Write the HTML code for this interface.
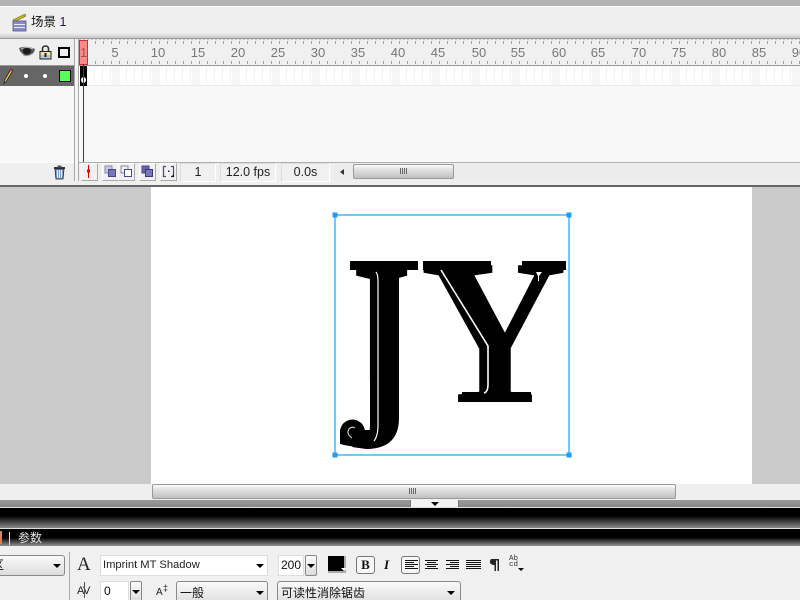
<!DOCTYPE html>
<html style="height:600px;overflow:hidden"><head><meta charset="utf-8">
<style>
html,body{margin:0;padding:0;background:#efefef}
body{width:800px;height:600px;font-family:"Liberation Sans","Noto Sans CJK SC",sans-serif;color:#111}
#w{position:relative;width:800px;height:600px;overflow:hidden}
.a{position:absolute}
.rn{position:absolute;top:45px;width:30px;text-align:center;font-size:13px;color:#777;line-height:15px}
.btn{position:absolute;top:163px;width:15px;height:16px;background:#f1f1f1;border-right:1px solid #aaa;border-bottom:1px solid #aaa;border-top:1px solid #fff;border-left:1px solid #fff}
.fld{position:absolute;top:163px;height:17px;background:#f0f0f0;border:1px solid #ddd;border-bottom-color:#fff;border-right-color:#fff;text-align:center;font-size:12.5px;line-height:17px;color:#222}
.thumb{background:linear-gradient(#fafafa,#e4e4e4 30%,#c0c0c0);border:1px solid #9a9a9a;border-radius:2px;box-sizing:border-box}
.inp{position:absolute;background:#fff;border:1px solid #ddd;box-sizing:border-box;font-size:12px;color:#111}
.sel{position:absolute;box-sizing:border-box;border:1px solid #8a8a8a;border-radius:3px;background:linear-gradient(#fafafa,#dcdcdc);font-size:12px}
.tri{position:absolute;width:0;height:0;border-left:4px solid transparent;border-right:4px solid transparent;border-top:4px solid #000}
</style></head><body><div id="w">

<!-- top -->
<div class="a" style="left:0;top:0;width:800px;height:6px;background:#b3b3b3"></div>
<div class="a" style="left:0;top:6px;width:800px;height:1px;background:#fff"></div>
<div class="a" style="left:0;top:33px;width:800px;height:5px;background:linear-gradient(#efefef,#c8c8c8)"></div>
<svg class="a" style="left:11px;top:12px" width="17" height="20" viewBox="0 0 17 20">
<path d="M2 8 L14 2 L15 4 L3 10Z" fill="#c8b820" stroke="#6b6420" stroke-width=".6"/>
<rect x="2" y="9" width="13" height="10" fill="#8a8ac8" stroke="#55558a" stroke-width=".8"/>
<rect x="3" y="12" width="11" height="1" fill="#e8e8f8"/><rect x="3" y="15" width="11" height="1" fill="#e8e8f8"/>
</svg>
<div class="a" style="left:31px;top:14px;font-size:12.5px;line-height:17px;font-family:'Liberation Sans','WenQuanYi Zen Hei','Noto Sans CJK SC',sans-serif;color:#111;white-space:pre">场景 <span style="color:#301050">1</span></div>

<!-- timeline left -->
<div class="a" style="left:0;top:38px;width:800px;height:1px;background:#9a9a9a"></div>
<div class="a" style="left:0;top:39px;width:74px;height:26px;background:#efefef"></div>
<div class="a" style="left:79px;top:39px;width:721px;height:26px;background:#f0f0f0"></div>
<div class="a" style="left:79px;top:39px;width:721px;height:1px;background:repeating-linear-gradient(90deg,#c4c4c4 0 2px,#eee 2px 4px)"></div>
<div class="a" style="left:95px;top:41px;width:705px;height:3px;background:repeating-linear-gradient(90deg,#a0a0a0 0 1px,transparent 1px 8px)"></div>
<div class="a" style="left:95px;top:61px;width:705px;height:3px;background:repeating-linear-gradient(90deg,#a0a0a0 0 1px,transparent 1px 8px)"></div>
<div class="a" style="left:0;top:65px;width:800px;height:1px;background:#999"></div>
<div class="a" style="left:74px;top:39px;width:1px;height:142px;background:#a8a8a8"></div>
<div class="a" style="left:75px;top:39px;width:3px;height:142px;background:#f4f4f4"></div>
<div class="a" style="left:78px;top:39px;width:1px;height:142px;background:#a8a8a8"></div>

<div class="rn" style="left:100px">5</div><div class="rn" style="left:143px">10</div><div class="rn" style="left:183px">15</div><div class="rn" style="left:223px">20</div><div class="rn" style="left:263px">25</div><div class="rn" style="left:303px">30</div><div class="rn" style="left:343px">35</div><div class="rn" style="left:383px">40</div><div class="rn" style="left:423px">45</div><div class="rn" style="left:464px">50</div><div class="rn" style="left:503px">55</div><div class="rn" style="left:544px">60</div><div class="rn" style="left:583px">65</div><div class="rn" style="left:624px">70</div><div class="rn" style="left:664px">75</div><div class="rn" style="left:704px">80</div><div class="rn" style="left:744px">85</div><div class="rn" style="left:784px">90</div>

<!-- header icons -->
<svg class="a" style="left:18px;top:45px" width="18" height="13" viewBox="0 0 18 13">
<path d="M1 3 Q8 0 17 4 L16 7 Q13 11 8 11 Q4 9 2 6Z" fill="#555"/><ellipse cx="9" cy="6" rx="4" ry="3.5" fill="#1c1c1c"/><path d="M3 4 Q8 1 15 4" stroke="#ccc" stroke-width=".8" fill="none"/><path d="M5 10 Q9 12 14 9" stroke="#aaa" stroke-width=".8" fill="none"/>
</svg>
<svg class="a" style="left:39px;top:45px" width="13" height="15" viewBox="0 0 13 15">
<path d="M3.500 7 V4 Q3.500 1 6.500 1 Q9.500 1 9.500 4 V7" fill="#eee" stroke="#333" stroke-width="1.600"/>
<rect x="1" y="6.500" width="11" height="7.500" fill="#f0e8a0" stroke="#222"/><rect x="2" y="10" width="9" height="3.500" fill="#b0c4e8"/><rect x="5.500" y="8" width="2" height="4" fill="#222"/>
</svg>
<div class="a" style="left:58px;top:47px;width:8px;height:7px;border:2.500px solid #000;background:#efefef"></div>

<!-- layer row -->
<div class="a" style="left:0;top:66px;width:74px;height:20px;background:#666"></div>
<svg class="a" style="left:3px;top:68px" width="11" height="17" viewBox="0 0 11 17">
<path d="M8 1 L10 2.500 L3.500 13 L1 15.500 L1.500 12Z" fill="#e8c850" stroke="#222" stroke-width=".8"/><path d="M8 1 L10 2.500 L9 4 L7 2.600Z" fill="#d04040"/>
</svg>
<div class="a" style="left:24px;top:74px;width:4px;height:4px;border-radius:50%;background:#fff"></div>
<div class="a" style="left:43px;top:74px;width:4px;height:4px;border-radius:50%;background:#fff"></div>
<div class="a" style="left:59px;top:70px;width:10px;height:10px;background:#55ff55;border:1px solid #000"></div>

<!-- timeline body -->
<div class="a" style="left:0;top:86px;width:74px;height:76px;background:#f8f8f8"></div>
<div class="a" style="left:79px;top:66px;width:721px;height:96px;background:#f8f8f8"></div>
<div class="a" style="left:79px;top:66px;width:721px;height:19px;background:repeating-linear-gradient(90deg,#fff 0 7px,#f3f3f3 7px 8px)"></div>
<div class="a" style="left:112px;top:66px;width:688px;height:19px;background:repeating-linear-gradient(90deg,#f6f6f6 0 8px,transparent 8px 40px)"></div>
<div class="a" style="left:79px;top:85px;width:721px;height:1px;background:#ececec"></div>
<div class="a" style="left:80px;top:66px;width:7px;height:20px;background:#000"></div>
<div class="a" style="left:81px;top:77px;width:5px;height:6px;border-radius:50%;background:#fff"></div>
<div class="a" style="left:79px;top:40px;width:7px;height:23px;background:#f88;border:1px solid #d03030"></div>
<div class="a" style="left:80px;top:45px;width:7px;text-align:center;font-size:13px;line-height:15px;color:#8a5a5a">1</div>
<div class="a" style="left:83px;top:64px;width:1px;height:98px;background:#d00000"></div>

<!-- status bar -->
<div class="a" style="left:0;top:162px;width:74px;height:1px;background:#fff"></div>
<div class="a" style="left:79px;top:162px;width:721px;height:1px;background:#b0b0b0"></div>
<div class="a" style="left:0;top:163px;width:74px;height:19px;background:#efefef"></div>
<div class="a" style="left:79px;top:163px;width:721px;height:19px;background:#efefef"></div>
<div class="a" style="left:0;top:181px;width:800px;height:4px;background:#efefef"></div>
<div class="a" style="left:0;top:185px;width:800px;height:2px;background:#666"></div>
<svg class="a" style="left:53px;top:165px" width="13" height="15" viewBox="0 0 13 15">
<rect x="1" y="2" width="11" height="2" fill="#333"/><rect x="4.500" y="0.500" width="4" height="2" fill="#555"/>
<path d="M2 4 H11 L10 14 H3Z" fill="#7f9ec0" stroke="#223" stroke-width=".8"/><path d="M4.500 5 V13 M6.500 5 V13 M8.500 5 V13" stroke="#fff" stroke-width=".8"/>
</svg>

<div class="btn" style="left:81px"></div>
<div class="a" style="left:88px;top:165px;width:1px;height:13px;background:#e00000"></div>
<div class="a" style="left:87px;top:169px;width:3px;height:4px;background:#e00000;border-radius:50%"></div>
<div class="btn" style="left:102px"></div>
<svg class="a" style="left:104px;top:165px" width="13" height="13"><rect x="1" y="1" width="7" height="7" fill="#c8c8e0" stroke="#8888b0"/><rect x="4.500" y="4.500" width="7" height="7" fill="#7878b8" stroke="#484890"/></svg>
<div class="btn" style="left:118px"></div>
<svg class="a" style="left:120px;top:165px" width="13" height="13"><rect x="1" y="1" width="7" height="7" fill="none" stroke="#8888b0"/><rect x="4.500" y="4.500" width="7" height="7" fill="#fff" stroke="#484890"/></svg>
<div class="btn" style="left:139px"></div>
<svg class="a" style="left:141px;top:165px" width="13" height="13"><rect x="1" y="1" width="7" height="7" fill="#6868a8" stroke="#484890"/><rect x="4.500" y="4.500" width="7" height="7" fill="#7878b8" stroke="#383880"/></svg>
<div class="btn" style="left:160px"></div>
<svg class="a" style="left:162px;top:165px" width="13" height="13"><path d="M4 1.500 H1.500 V11.500 H4 M9 1.500 H11.500 V11.500 H9" fill="none" stroke="#484890" stroke-width="1.200"/><rect x="6" y="5.500" width="1.500" height="1.500" fill="#222"/><path d="M9 12 L12 12 L12 9Z" fill="#111"/></svg>

<div class="fld" style="left:180px;width:34px;">1</div>
<div class="fld" style="left:220px;width:54px;">12.0 fps</div>
<div class="fld" style="left:281px;width:47px;">0.0s</div>

<div class="a" style="left:334px;top:163px;width:466px;height:17px;background:#ececec"></div>
<div class="a" style="left:340px;top:169px;width:0;height:0;border-top:3px solid transparent;border-bottom:3px solid transparent;border-right:4px solid #333"></div>
<div class="a thumb" style="left:353px;top:164px;width:101px;height:15px"></div>
<div class="a" style="left:400px;top:168px;width:7px;height:6px;background:repeating-linear-gradient(90deg,#666 0 1px,transparent 1px 2px)"></div>

<!-- stage -->
<div class="a" style="left:0;top:187px;width:800px;height:297px;background:#cbcbcb"></div>
<div class="a" style="left:151px;top:187px;width:601px;height:297px;background:#fff"></div>

<svg class="a" style="left:0;top:0" width="800" height="600" viewBox="0 0 800 600">
<g font-family="Liberation Serif" font-weight="bold" fill="#000">
<text transform="translate(330 444) scale(.24 .40)" font-size="680">J</text>
<text transform="translate(420 402) scale(.30 .307)" font-size="680">Y</text>
</g>
<!-- reshape the J tail: clear the flag, then the ball terminal and stem weight -->
<rect x="334" y="380" width="36" height="50" fill="#fff"/>
<rect x="334" y="425" width="6" height="26" fill="#fff"/>
<path d="M370 268 H399 V418 Q399 449 366 449 L352 447 L364 437 Q370 436 370 425Z" fill="#000"/>
<circle cx="352.500" cy="432" r="12.500" fill="#000"/>
<path d="M352 438 Q346 434 349 429 Q352 426 355 428" fill="none" stroke="#ddd" stroke-width="1"/>
<g fill="#000">
<rect x="350" y="261" width="68" height="9"/>
<rect x="423" y="261" width="68" height="9"/>
<rect x="522" y="261" width="44" height="9"/>
<rect x="462" y="392" width="69" height="10"/>
</g>
<path d="M376 272 Q378 274 378 282 V425 Q378 436 374 441" fill="none" stroke="#fff" stroke-width="1.200"/>
<path d="M441 270 L488 346 V384 Q488 392 484 393" fill="none" stroke="#fff" stroke-width="1.600"/>
<path d="M536 272 H542 L539 276 V281 H538 V276Z" fill="#fff"/>
<rect x="335" y="215" width="234" height="240" fill="none" stroke="#2eb4ff" stroke-width="1.400"/>
<rect x="332.500" y="212.500" width="5" height="5" fill="#1e9fff"/>
<rect x="566.500" y="212.500" width="5" height="5" fill="#1e9fff"/>
<rect x="332.500" y="452.500" width="5" height="5" fill="#1e9fff"/>
<rect x="566.500" y="452.500" width="5" height="5" fill="#1e9fff"/>
</svg>

<!-- stage scrollbar -->
<div class="a" style="left:0;top:484px;width:800px;height:16px;background:#efefef"></div>
<div class="a thumb" style="left:152px;top:484px;width:524px;height:15px"></div>
<div class="a" style="left:409px;top:488px;width:7px;height:6px;background:repeating-linear-gradient(90deg,#666 0 1px,transparent 1px 2px)"></div>

<!-- dividers -->
<div class="a" style="left:0;top:500px;width:800px;height:7px;background:linear-gradient(#999,#8a8a8a)"></div>
<div class="a" style="left:410px;top:500px;width:49px;height:7px;background:#f2f2f2;border-left:1px solid #777;border-right:1px solid #777;box-sizing:border-box"></div>
<div class="tri" style="left:431px;top:502px"></div>
<div class="a" style="left:0;top:507px;width:800px;height:1px;background:#ddd"></div>
<div class="a" style="left:0;top:508px;width:800px;height:20px;background:linear-gradient(#000,#000 40%,#8a8a8a)"></div>
<div class="a" style="left:0;top:528px;width:800px;height:1px;background:#ddd"></div>
<div class="a" style="left:0;top:529px;width:800px;height:17px;background:linear-gradient(#000,#000 50%,#909090)"></div>
<div class="a" style="left:0;top:531px;width:2px;height:13px;background:#d88050"></div>
<div class="a" style="left:9px;top:532px;width:1px;height:13px;background:#ddd"></div>
<div class="a" style="left:18px;top:531px;font-size:12px;line-height:15px;color:#e8e8e8;font-family:'Liberation Sans','WenQuanYi Zen Hei','Noto Sans CJK SC',sans-serif">参数</div>

<!-- properties panel -->
<div class="a" style="left:0;top:546px;width:800px;height:54px;background:#f0f0f0"></div>
<div class="a" style="left:69px;top:552px;width:1px;height:48px;background:#aaa"></div>

<div class="sel" style="left:-6px;top:555px;width:71px;height:21px;line-height:19px;overflow:hidden;text-indent:-3px">区</div>
<div class="tri" style="left:53px;top:564px"></div>

<div class="a" style="left:77px;top:555px;font-family:'Liberation Serif',serif;font-size:19px;line-height:20px;color:#222">A</div>
<div class="inp" style="left:100px;top:555px;width:168px;height:21px;line-height:19px;padding-left:2px;font-size:11.200px;color:#222">Imprint MT Shadow</div>
<div class="tri" style="left:256px;top:564px"></div>

<div class="inp" style="left:278px;top:555px;width:26px;height:21px;line-height:19px;text-align:center">200</div>
<div class="a" style="left:305px;top:555px;width:12px;height:21px;box-sizing:border-box;border:1px solid #888;border-radius:2px;background:linear-gradient(#fafafa,#ddd)"></div>
<div class="tri" style="left:307px;top:564px"></div>

<div class="a" style="left:328px;top:556px;width:16px;height:15px;background:#000;border-right:2px solid #aaa;border-bottom:2px solid #aaa"></div>
<div class="a" style="left:341px;top:568px;width:0;height:0;border-left:3px solid transparent;border-right:3px solid transparent;border-top:3px solid #fff"></div>
<div class="a" style="left:356px;top:556px;width:19px;height:18px;box-sizing:border-box;border:1px solid #777;border-radius:3px;background:#f6f6f6;text-align:center;font-family:'Liberation Serif',serif;font-weight:bold;font-size:13px;line-height:16px">B</div>
<div class="a" style="left:384px;top:557px;width:10px;font-family:'Liberation Serif',serif;font-weight:bold;font-style:italic;font-size:13px;line-height:15px">I</div>

<div class="a" style="left:401px;top:556px;width:19px;height:18px;box-sizing:border-box;border:1px solid #777;border-radius:3px;background:#f6f6f6"></div>
<svg class="a" style="left:400px;top:555px" width="120" height="20" shape-rendering="crispEdges">
<path d="M5 5.500H18M5 7.500H14M5 9.500H18M5 11.500H14M5 13.500H18" stroke="#111"/>
<path d="M25 5.500H38M27 7.500H36M25 9.500H38M27 11.500H36M25 13.500H38" stroke="#111"/>
<path d="M46 5.500H59M50 7.500H59M46 9.500H59M50 11.500H59M46 13.500H59" stroke="#111"/>
<path d="M66 5.500H81M66 7.500H81M66 9.500H81M66 11.500H81M66 13.500H81" stroke="#111"/>
<path d="M92 4H99V16H97.500V5.500H96V16H94.500V10H93Q90 9 90 7 Q90 4 92 4Z" fill="#222"/>
</svg>
<div class="a" style="left:509px;top:556px;font-size:7.500px;line-height:6px;color:#333;font-family:'Liberation Mono',monospace">Ab<br>cd</div>
<div class="a" style="left:518px;top:568px;width:0;height:0;border-left:3px solid transparent;border-right:3px solid transparent;border-top:3px solid #000"></div>

<!-- row 2 -->
<div class="a" style="left:77px;top:585px;font-size:11px;line-height:13px;color:#222;letter-spacing:-.5px">AV</div>
<div class="a" style="left:84px;top:582px;width:1px;height:16px;background:#555"></div>
<div class="inp" style="left:100px;top:581px;width:29px;height:21px;line-height:19px;padding-left:3px">0</div>
<div class="a" style="left:130px;top:581px;width:12px;height:21px;box-sizing:border-box;border:1px solid #888;border-radius:2px;background:linear-gradient(#fafafa,#ddd)"></div>
<div class="tri" style="left:132px;top:590px"></div>
<div class="a" style="left:156px;top:587px;font-size:10px;line-height:11px;color:#222">A</div>
<div class="a" style="left:163px;top:583px;font-size:9px;line-height:11px;color:#222">‡</div>
<div class="sel" style="left:176px;top:581px;width:92px;height:24px;line-height:22px;padding-left:3px">一般</div>
<div class="tri" style="left:256px;top:591px"></div>
<div class="sel" style="left:277px;top:581px;width:184px;height:24px;line-height:22px;padding-left:3px">可读性消除锯齿</div>
<div class="tri" style="left:447px;top:591px"></div>

</div></body></html>
